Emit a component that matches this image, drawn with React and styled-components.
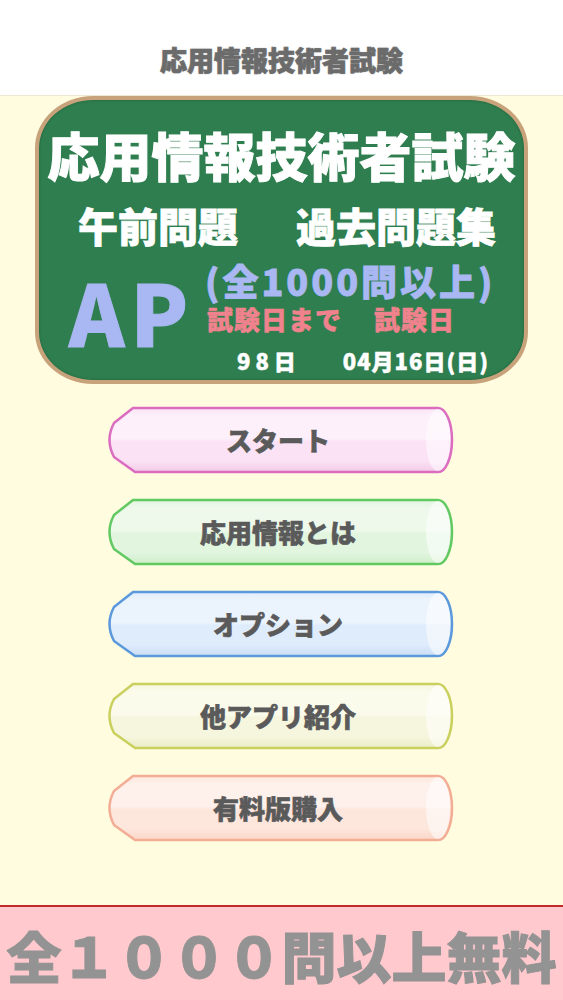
import React from "react";
import styled, { createGlobalStyle } from "styled-components";

const GlobalStyle = createGlobalStyle`
  html, body {
    margin: 0;
    padding: 0;
    background: #fffcdf;
  }
  * {
    box-sizing: border-box;
  }
`;

const font = `"Noto Sans CJK JP", "Noto Sans", sans-serif`;

const Page = styled.div`
  width: 563px;
  height: 1000px;
  display: flex;
  flex-direction: column;
  background: #fffcdf;
  font-family: ${font};
  font-weight: 900;
  overflow: hidden;
`;

const Header = styled.header`
  height: 96px;
  background: #ffffff;
  border-bottom: 1px solid #ece8d4;
  display: flex;
  align-items: flex-end;
  justify-content: center;
  padding-bottom: 20px;
`;

const HeaderTitle = styled.h1`
  margin: 0;
  font-size: 27px;
  line-height: 30px;
  font-weight: 900;
  color: #6b6b6b;
  -webkit-text-stroke: 0.7px #6b6b6b;
  text-shadow: 0 0 2px rgba(0, 0, 0, 0.25);
`;

const Board = styled.section`
  width: 493px;
  height: 288px;
  margin: 0 auto;
  background: #2e7e4f;
  border: 4px solid #c7a27a;
  border-radius: 58px / 52px;
  box-shadow: inset 0 0 3px rgba(0, 0, 0, 0.25);
  padding-top: 25px;
  display: flex;
  flex-direction: column;
`;

const BoardTitle = styled.div`
  text-align: center;
  color: #ffffff;
  font-size: 52px;
  line-height: 60px;
  -webkit-text-stroke: 1px #ffffff;
`;

const SubRow = styled.div`
  margin-top: 18px;
  display: flex;
  justify-content: center;
  gap: 58px;
  padding-left: 11px;
  color: #ffffff;
  font-size: 40px;
  line-height: 44px;
  -webkit-text-stroke: 0.8px #ffffff;
`;

const Lower = styled.div`
  display: flex;
  align-items: flex-start;
  padding-left: 30px;
  margin-top: 15px;
`;

const Badge = styled.div`
  width: 138px;
  margin-top: 7px;
  font-size: 84px;
  line-height: 84px;
  letter-spacing: 6px;
  color: #a9b7f2;
  -webkit-text-stroke: 1px #a9b7f2;
`;

const InfoColumn = styled.div`
  display: flex;
  flex-direction: column;
`;

const Count = styled.div`
  color: #a9b7f2;
  font-size: 36px;
  line-height: 36px;
  letter-spacing: 3px;
  margin-left: -2px;
  -webkit-text-stroke: 0.8px #a9b7f2;
`;

const DateLabels = styled.div`
  margin-top: 8px;
  display: flex;
  gap: 32px;
  color: #f0828e;
  font-size: 26px;
  line-height: 26px;
  letter-spacing: 1px;
  -webkit-text-stroke: 0.5px #f0828e;
`;

const DateValues = styled.div`
  margin-top: 15px;
  padding-left: 30px;
  display: flex;
  gap: 42px;
  color: #ffffff;
  font-size: 22px;
  line-height: 26px;
  -webkit-text-stroke: 0.5px #ffffff;
`;

const DateValue = styled.span`
  letter-spacing: ${(p) => (p.$wide ? "5px" : "1px")};
`;

const Menu = styled.nav`
  margin-top: 22px;
  display: flex;
  flex-direction: column;
  align-items: center;
  gap: 24px;
`;

const ChalkButton = styled.button`
  position: relative;
  width: 350px;
  height: 68px;
  padding: 0;
  margin-left: -3px;
  border: none;
  background: transparent;
  cursor: pointer;
  font-family: ${font};
  font-weight: 900;
  font-size: 26px;
  color: #5a5a5a;
  -webkit-text-stroke: 0.6px #5a5a5a;

  svg {
    position: absolute;
    inset: 0;
  }
`;

const Label = styled.span`
  position: relative;
  display: block;
  line-height: 68px;
  padding-right: 4px;
`;

const Footer = styled.footer`
  margin-top: auto;
  height: 95px;
  background: #ffc9cd;
  border-top: 2px solid #c22a2a;
  display: flex;
  align-items: center;
  justify-content: center;
`;

const FooterText = styled.div`
  font-size: 55px;
  line-height: 60px;
  color: #939393;
  -webkit-text-stroke: 1px #939393;
`;

const buttons = [
  { label: "スタート", stroke: "#dc6cc0", light: "#fdf0fa", mid: "#fbe3f5", dark: "#f3cbe8" },
  { label: "応用情報とは", stroke: "#62c962", light: "#eef9ec", mid: "#e2f5df", dark: "#cdeec9" },
  { label: "オプション", stroke: "#5b99dc", light: "#ebf4fd", mid: "#dfecfb", dark: "#c9def6" },
  { label: "他アプリ紹介", stroke: "#c9d05e", light: "#fbfbec", mid: "#f5f6dd", dark: "#eaedc6" },
  { label: "有料版購入", stroke: "#f3ad95", light: "#fef0ea", mid: "#fde6dc", dark: "#fad6c8" },
];

function ChalkShape({ id, stroke, light, mid, dark }) {
  return (
    <svg width="350" height="68" viewBox="0 0 350 68">
      <defs>
        <linearGradient id={id} x1="0" y1="0" x2="0" y2="1">
          <stop offset="0" stopColor={mid} />
          <stop offset="0.12" stopColor={light} />
          <stop offset="0.48" stopColor={light} />
          <stop offset="0.52" stopColor={mid} />
          <stop offset="0.82" stopColor={mid} />
          <stop offset="1" stopColor={dark} />
        </linearGradient>
      </defs>
      <path
        d="M28 2 L333 2 A14 32 0 0 1 333 66 L30 66 L9 51 Q0 34 9 17 Z"
        fill={`url(#${id})`}
        stroke={stroke}
        strokeWidth="2.5"
        strokeLinejoin="round"
      />
      <ellipse cx="333" cy="34" rx="12" ry="31" fill="#ffffff" opacity="0.55" />
    </svg>
  );
}

export default function App() {
  return (
    <Page>
      <GlobalStyle />
      <Header>
        <HeaderTitle>応用情報技術者試験</HeaderTitle>
      </Header>

      <Board>
        <BoardTitle>応用情報技術者試験</BoardTitle>
        <SubRow>
          <span>午前問題</span>
          <span>過去問題集</span>
        </SubRow>
        <Lower>
          <Badge>AP</Badge>
          <InfoColumn>
            <Count>(全1000問以上)</Count>
            <DateLabels>
              <span>試験日まで</span>
              <span>試験日</span>
            </DateLabels>
            <DateValues>
              <DateValue $wide>98日</DateValue>
              <DateValue>04月16日(日)</DateValue>
            </DateValues>
          </InfoColumn>
        </Lower>
      </Board>

      <Menu>
        {buttons.map((b, i) => (
          <ChalkButton key={b.label}>
            <ChalkShape id={`chalk-${i}`} {...b} />
            <Label>{b.label}</Label>
          </ChalkButton>
        ))}
      </Menu>

      <Footer>
        <FooterText>全１０００問以上無料</FooterText>
      </Footer>
    </Page>
  );
}
